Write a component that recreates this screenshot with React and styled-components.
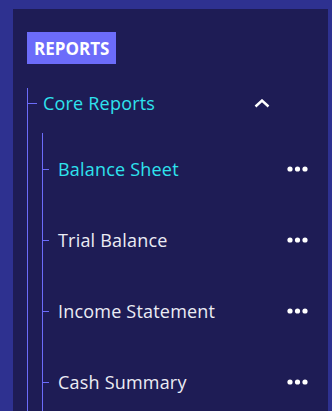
import React from 'react';
import styled, { createGlobalStyle } from 'styled-components';

const GlobalStyle = createGlobalStyle`
    html, body {
        margin: 0;
        padding: 0;
        background-color: #2e3190;
        font-family: 'Open Sans', 'Noto Sans', sans-serif;
    }
`;

const Page = styled.div`
    height: 411px;
    padding: 9px 4px 0 13px;
    box-sizing: border-box;
    overflow: hidden;
`;

const Panel = styled.div`
    background-color: #1e1c55;
    height: 100%;
    padding: 23px 0 0 14px;
    box-sizing: border-box;
`;

const Badge = styled.div`
    display: flex;
    align-items: center;
    width: fit-content;
    height: 32px;
    padding: 0 7px;
    background-color: #6c6cfa;
    color: #ffffff;
    font-weight: 700;
    font-size: 17px;
    letter-spacing: 0;
`;

const Tree = styled.div`
    border-left: 1px solid #6c6cfa;
    height: 400px;
`;

const GroupHeader = styled.div`
    position: relative;
    display: flex;
    align-items: center;
    justify-content: space-between;
    height: 30px;
    margin: 24px 58px 15px 0;
    padding-left: 15px;
    color: #2ee3ee;
    font-size: 18px;
    letter-spacing: 0.2px;

    &::before {
        content: '';
        position: absolute;
        left: 0;
        top: 50%;
        width: 9px;
        height: 1px;
        background-color: #6c6cfa;
    }
`;

const SubList = styled.div`
    margin-left: 14px;
    border-left: 1px solid #6c6cfa;
    height: 300px;
`;

const Item = styled.div`
    position: relative;
    display: flex;
    align-items: center;
    justify-content: space-between;
    height: 71px;
    padding: 0 20px 0 15px;
    color: ${(props) => (props.$active ? '#2ee3ee' : '#ececf4')};
    font-size: 18px;
    letter-spacing: 0.2px;

    &::before {
        content: '';
        position: absolute;
        left: 0;
        top: 50%;
        width: 6px;
        height: 1px;
        background-color: #6c6cfa;
    }
`;

const Dots = styled.svg`
    width: 21px;
    height: 6px;
    display: block;
`;

const Chevron = styled.svg`
    width: 16px;
    height: 9px;
    display: block;
`;

const items = ['Balance Sheet', 'Trial Balance', 'Income Statement', 'Cash Summary'];

const MoreIcon = () => (
    <Dots viewBox="0 0 21 6">
        <circle cx="3" cy="3" r="2.6" fill="#fff" />
        <circle cx="10.5" cy="3" r="2.6" fill="#fff" />
        <circle cx="18" cy="3" r="2.6" fill="#fff" />
    </Dots>
);

const App = () => {
    return (
        <>
            <GlobalStyle />
            <Page>
                <Panel>
                    <Badge>REPORTS</Badge>
                    <Tree>
                        <GroupHeader>
                            <span>Core Reports</span>
                            <Chevron viewBox="0 0 16 9">
                                <path d="M1.5 7.5 L8 1.5 L14.5 7.5" fill="none" stroke="#fff" strokeWidth="2.4" />
                            </Chevron>
                        </GroupHeader>
                        <SubList>
                            {items.map((label, i) => (
                                <Item key={label} $active={i === 0}>
                                    <span>{label}</span>
                                    <MoreIcon />
                                </Item>
                            ))}
                        </SubList>
                    </Tree>
                </Panel>
            </Page>
        </>
    );
};

export default App;
